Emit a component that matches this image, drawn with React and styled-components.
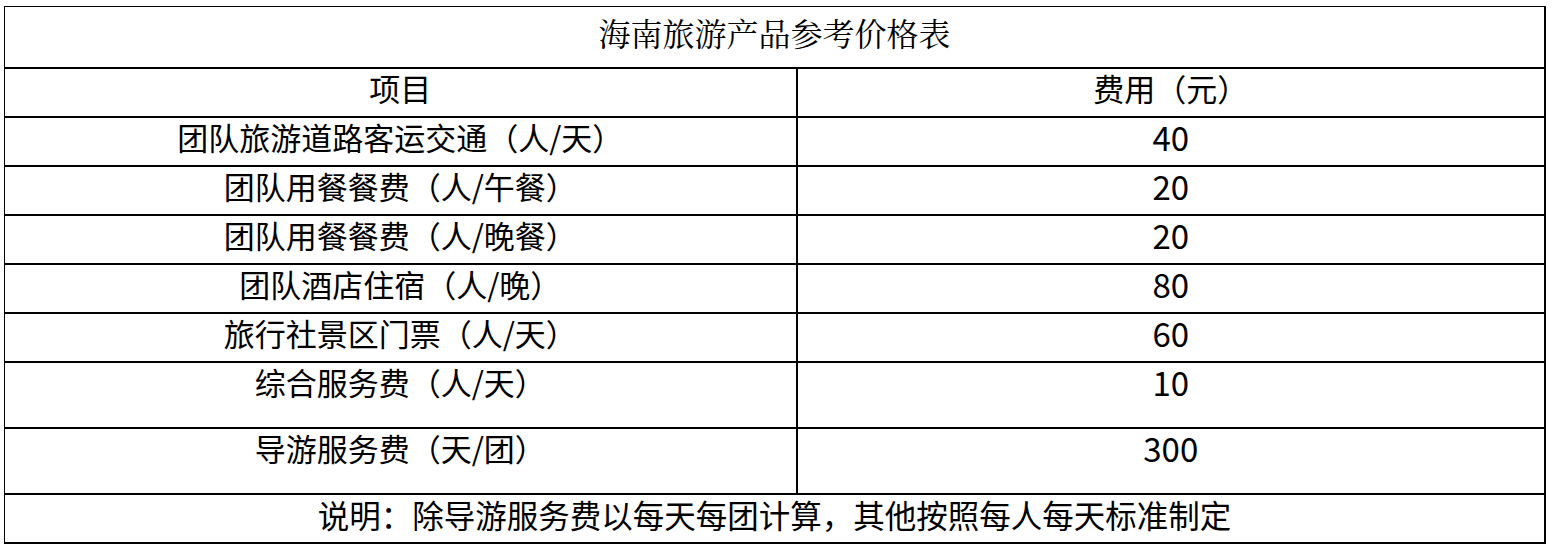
import styled, { createGlobalStyle } from 'styled-components';

const GlobalStyle = createGlobalStyle`
  html, body {
    margin: 0;
    padding: 0;
    background: #ffffff;
  }
  body {
    font-family: "Noto Sans CJK SC", "Noto Sans", sans-serif;
    color: #000000;
  }
`;

const Page = styled.div`
  padding: 6px 6px 0 4px;
  width: 1552px;
  box-sizing: border-box;
`;

const Sheet = styled.table`
  width: 1542px;
  border-collapse: collapse;
  table-layout: fixed;
  border-top: 1px solid #000;
  border-left: 1px solid #000;
  border-right: 2px solid #000;
  border-bottom: 2px solid #000;
`;

const TitleCell = styled.td`
  height: 60px;
  padding: 0;
  text-align: center;
  vertical-align: top;
  font-family: "Noto Serif CJK SC", "Noto Sans CJK SC", serif;
  font-size: 32px;
  line-height: 50px;
  border-bottom: 2px solid #000;
`;

const Cell = styled.td`
  height: ${({ $h }) => $h}px;
  padding: 0;
  text-align: center;
  vertical-align: top;
  font-size: ${({ $size }) => $size || 31}px;
  line-height: 38px;
  border-bottom: 2px solid #000;
  border-right: ${({ $split }) => ($split ? '2px solid #000' : 'none')};
  white-space: nowrap;
`;

const rows = [
  { item: '团队旅游道路客运交通（人/天）', price: '40', h: 47 },
  { item: '团队用餐餐费（人/午餐）', price: '20', h: 47 },
  { item: '团队用餐餐费（人/晚餐）', price: '20', h: 47 },
  { item: '团队酒店住宿（人/晚）', price: '80', h: 47 },
  { item: '旅行社景区门票（人/天）', price: '60', h: 47 },
  { item: '综合服务费（人/天）', price: '10', h: 64 },
  { item: '导游服务费（天/团）', price: '300', h: 64 },
];

export default function App() {
  return (
    <Page>
      <GlobalStyle />
      <Sheet>
        <colgroup>
          <col style={{ width: '792px' }} />
          <col />
        </colgroup>
        <tbody>
          <tr>
            <TitleCell colSpan={2}>海南旅游产品参考价格表</TitleCell>
          </tr>
          <tr>
            <Cell $h={47} $split>项目</Cell>
            <Cell $h={47}>费用（元）</Cell>
          </tr>
          {rows.map((r, i) => (
            <tr key={i}>
              <Cell $h={r.h} $split>{r.item}</Cell>
              <Cell $h={r.h} $size={33}>{r.price}</Cell>
            </tr>
          ))}
          <tr>
            <Cell $h={47} $size={31.5} colSpan={2}>
              说明：除导游服务费以每天每团计算，其他按照每人每天标准制定
            </Cell>
          </tr>
        </tbody>
      </Sheet>
    </Page>
  );
}
